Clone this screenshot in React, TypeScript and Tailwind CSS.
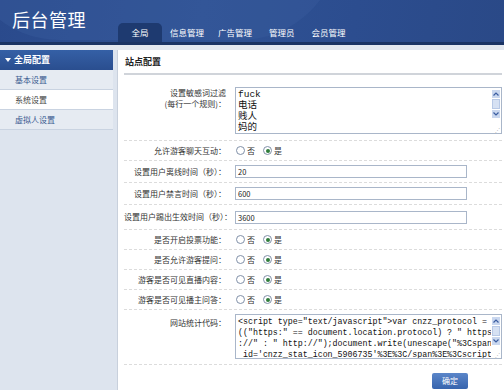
import React from "react";

const Radio = ({ checked }: { checked?: boolean }) => (
  <span className="inline-flex items-center justify-center w-[9px] h-[9px] rounded-full border border-[#8090a8] bg-white">
    {checked && <span className="w-[4px] h-[4px] rounded-full bg-[#2f7d3a]" />}
  </span>
);

const RadioRow = ({ label }: { label: string }) => (
  <div className="flex items-center h-[20px] border-b border-dashed border-[#dcdcdc]">
    <div className="w-[104px] text-right text-[8px] text-[#333] pr-[2px]">{label}</div>
    <div className="flex items-center ml-[8px] gap-[2px] text-[8px] text-[#333]">
      <Radio />
      <span className="mr-[6px]">否</span>
      <Radio checked />
      <span>是</span>
    </div>
  </div>
);

const InputRow = ({ label, value, tall }: { label: string; value: string; tall?: boolean }) => (
  <div className={`flex items-center border-b border-dashed border-[#dcdcdc] ${tall ? "h-[25px]" : "h-[22px]"}`}>
    <div className="w-[104px] text-right text-[8px] text-[#333] whitespace-nowrap pr-[2px]">{label}</div>
    <div className="ml-[7px] w-[232px] h-[13px] border border-[#a9b6c9] bg-white text-[7.5px] leading-[11px] px-[2px] text-[#222]">
      {value}
    </div>
  </div>
);

const FakeScroll = () => (
  <div className="w-[10px] flex flex-col items-center pt-[2px] gap-[1px]">
    <div className="w-[8px] h-[8px] bg-[#c9d7ef] flex items-center justify-center">
      <svg width="6" height="4" viewBox="0 0 6 4"><path d="M0.5 3.5 L3 1 L5.5 3.5" stroke="#3b5da0" strokeWidth="1.2" fill="none" /></svg>
    </div>
    <div className="w-[8px] h-[10px] bg-[#d6e1f3] border border-[#b8c9e6]" />
    <div className="w-[8px] h-[8px] bg-[#c9d7ef] flex items-center justify-center">
      <svg width="6" height="4" viewBox="0 0 6 4"><path d="M0.5 0.5 L3 3 L5.5 0.5" stroke="#3b5da0" strokeWidth="1.2" fill="none" /></svg>
    </div>
    <div className="flex-1" />
    <div className="text-[5px] leading-[5px] text-[#aaa] self-end pr-[1px] pb-[1px]">⋰</div>
  </div>
);

export default function App() {
  return (
    <div className="w-[504px] h-[390px] overflow-hidden bg-[#dde4ee] font-['Noto_Sans_CJK_SC',sans-serif]">
      <header className="relative h-[42px] bg-[linear-gradient(100deg,#2a4a8c_0%,#2f5294_40%,#2c4d8f_70%,#2a4987_100%)] overflow-hidden">
        <div className="absolute -left-[40px] top-[-160px] w-[380px] h-[200px] rounded-full bg-[#3a5d9e] opacity-40" />
        <div className="relative flex items-end h-full">
          <div className="text-white text-[18px] leading-[20px] pl-[12px] pb-[13px] w-[118px] tracking-[0.5px]">后台管理</div>
          <nav className="flex items-end text-[8.5px] text-white h-[19px]">
            <div className="w-[44px] h-full rounded-t-[5px] bg-[#1e3a70] flex items-center justify-center">全局</div>
            <div className="ml-[8px] h-full flex items-center">信息管理</div>
            <div className="ml-[14px] h-full flex items-center">广告管理</div>
            <div className="ml-[17px] h-full flex items-center">管理员</div>
            <div className="ml-[17px] h-full flex items-center">会员管理</div>
          </nav>
        </div>
      </header>
      <div className="h-[3px] bg-[#1b3464]" />
      <div className="h-[5px] bg-[#e3e8f0]" />
      <div className="flex">
        <aside className="w-[113px] shrink-0">
          <div className="h-[20px] bg-[linear-gradient(#3560a6,#2a4e8f)] flex items-center text-white text-[9px] font-bold pl-[5px]">
            <svg width="6" height="4" viewBox="0 0 6 4" className="mr-[3px]"><path d="M0 0 L6 0 L3 4 Z" fill="#fff" /></svg>
            全局配置
          </div>
          <div className="h-[20px] bg-[#e6ebf2] border-b border-[#c9d3e1] flex items-center pl-[15px] text-[8px] text-[#3a5a90]">基本设置</div>
          <div className="h-[20px] bg-white border-b border-[#c9d3e1] flex items-center pl-[15px] text-[8px] text-[#444]">系统设置</div>
          <div className="h-[20px] bg-[#e6ebf2] border-b border-[#c9d3e1] flex items-center pl-[15px] text-[8px] text-[#3a5a90]">虚拟人设置</div>
        </aside>
        <main className="ml-[4px] flex-1 bg-white h-[340px] border-l border-[#c8d0dc] pl-[6px] pr-[4px]">
          <div className="h-[25px] border-b-2 border-[#d0d4da] flex items-center text-[9px] font-bold text-[#222] pl-[1px]">站点配置</div>
          <div className="flex pt-[12px] pb-[6px] border-b border-dashed border-[#dcdcdc]">
            <div className="w-[104px] text-right text-[8px] leading-[11px] text-[#333] pr-[2px]">
              设置敏感词过滤<br />(每行一个规则)：
            </div>
            <div className="ml-[7px] w-[267px] h-[47px] border border-[#a9b6c9] bg-white flex">
              <div className="flex-1 pl-[2px] pt-[1px] text-[9.5px] leading-[11px] text-[#111] font-['Liberation_Mono','Noto_Sans_CJK_SC',monospace]">
                fuck<br />电话<br />贱人<br />妈的
              </div>
              <FakeScroll />
            </div>
          </div>
          <RadioRow label="允许游客聊天互动：" />
          <InputRow label="设置用户离线时间（秒）：" value="20" />
          <InputRow label="设置用户禁言时间（秒）：" value="600" />
          <InputRow label="设置用户踢出生效时间（秒）：" value="3600" tall />
          <RadioRow label="是否开启投票功能：" />
          <RadioRow label="是否允许游客提问：" />
          <RadioRow label="游客是否可见直播内容：" />
          <RadioRow label="游客是否可见播主问答：" />
          <div className="flex pt-[4px] pb-[5px] border-b border-dashed border-[#dcdcdc]">
            <div className="w-[104px] text-right text-[8px] leading-[11px] text-[#333] pt-[3px] pr-[2px]">网站统计代码：</div>
            <div className="ml-[7px] w-[267px] h-[45px] border border-[#a9b6c9] bg-white flex">
              <div className="flex-1 overflow-hidden pl-[2px] pt-[1px] text-[8.3px] leading-[11px] text-[#111] whitespace-pre font-['Liberation_Mono','Noto_Sans_CJK_SC',monospace]">
                {`<script type="text/javascript">var cnzz_protocol =\n(("https:" == document.location.protocol) ? " https\n://" : " http://");document.write(unescape("%3Cspan\n id='cnzz_stat_icon_5906735'%3E%3C/span%3E%3Cscript`}
              </div>
              <FakeScroll />
            </div>
          </div>
          <div className="flex pt-[8px] pl-[308px]">
            <div className="w-[36px] h-[16px] rounded-[2px] bg-[linear-gradient(#5b86c9,#3764ad)] text-white text-[8px] flex items-center justify-center">确定</div>
          </div>
        </main>
      </div>
    </div>
  );
}
